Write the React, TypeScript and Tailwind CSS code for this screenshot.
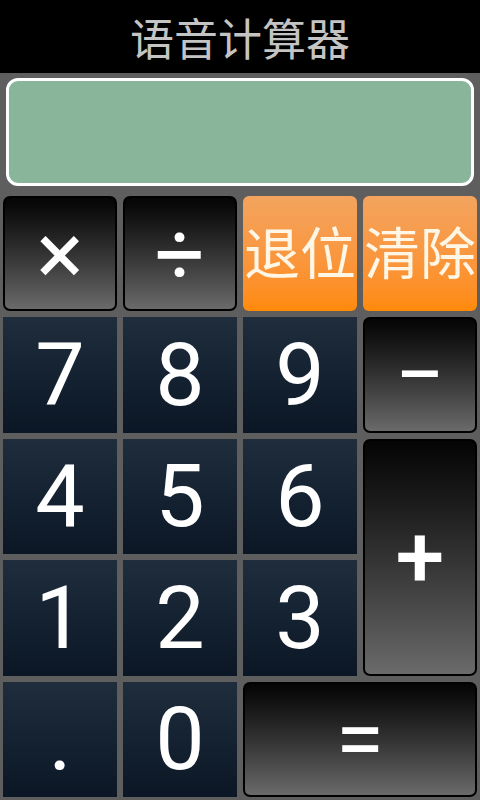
import React from 'react';

const num =
  'flex items-center justify-center bg-gradient-to-b from-[#1f2d3d] to-[#0b1725] text-white text-[88px] leading-none';
const op =
  'flex items-center justify-center rounded-[7px] border-2 border-black bg-gradient-to-b from-[#050505] to-[#6a6a6a] text-white text-[88px] leading-none';
const orange =
  'flex items-center justify-center overflow-hidden whitespace-nowrap rounded-[6px] bg-gradient-to-b from-[#f3a45e] to-[#ff8a05] pb-[8px] text-[#fff6e6] text-[56px] leading-none';

export default function App() {
  const cjk = { fontFamily: '"Noto Sans CJK SC", "Noto Sans", sans-serif' };
  const digits = { fontFamily: 'Roboto, "Liberation Sans", sans-serif' };

  return (
    <div className="flex h-[800px] w-[480px] flex-col bg-[#5e5e5e]">
      <div className="flex h-[73px] items-center justify-center bg-black text-[44px] leading-none text-[#c4c4c4]" style={cjk}>
        语音计算器
      </div>

      <div className="px-[6px] pt-[5px]">
        <div className="h-[108px] rounded-[12px] border-[3px] border-white bg-[#89b59a]" />
      </div>

      <div
        className="mt-[10px] grid h-[601px] grid-cols-4 grid-rows-5 gap-[6px] px-[3px]"
        style={digits}
      >
        <div className={op}>×</div>
        <div className={op}>÷</div>
        <div className={orange} style={cjk}>退位</div>
        <div className={orange} style={cjk}>清除</div>

        <div className={num}>7</div>
        <div className={num}>8</div>
        <div className={num}>9</div>
        <div className={op}>−</div>

        <div className={num}>4</div>
        <div className={num}>5</div>
        <div className={num}>6</div>
        <div className={`${op} row-span-2 font-medium`}>+</div>

        <div className={num}>1</div>
        <div className={num}>2</div>
        <div className={num}>3</div>

        <div className={num}>.</div>
        <div className={num}>0</div>
        <div className={`${op} col-span-2`}>=</div>
      </div>
    </div>
  );
}
